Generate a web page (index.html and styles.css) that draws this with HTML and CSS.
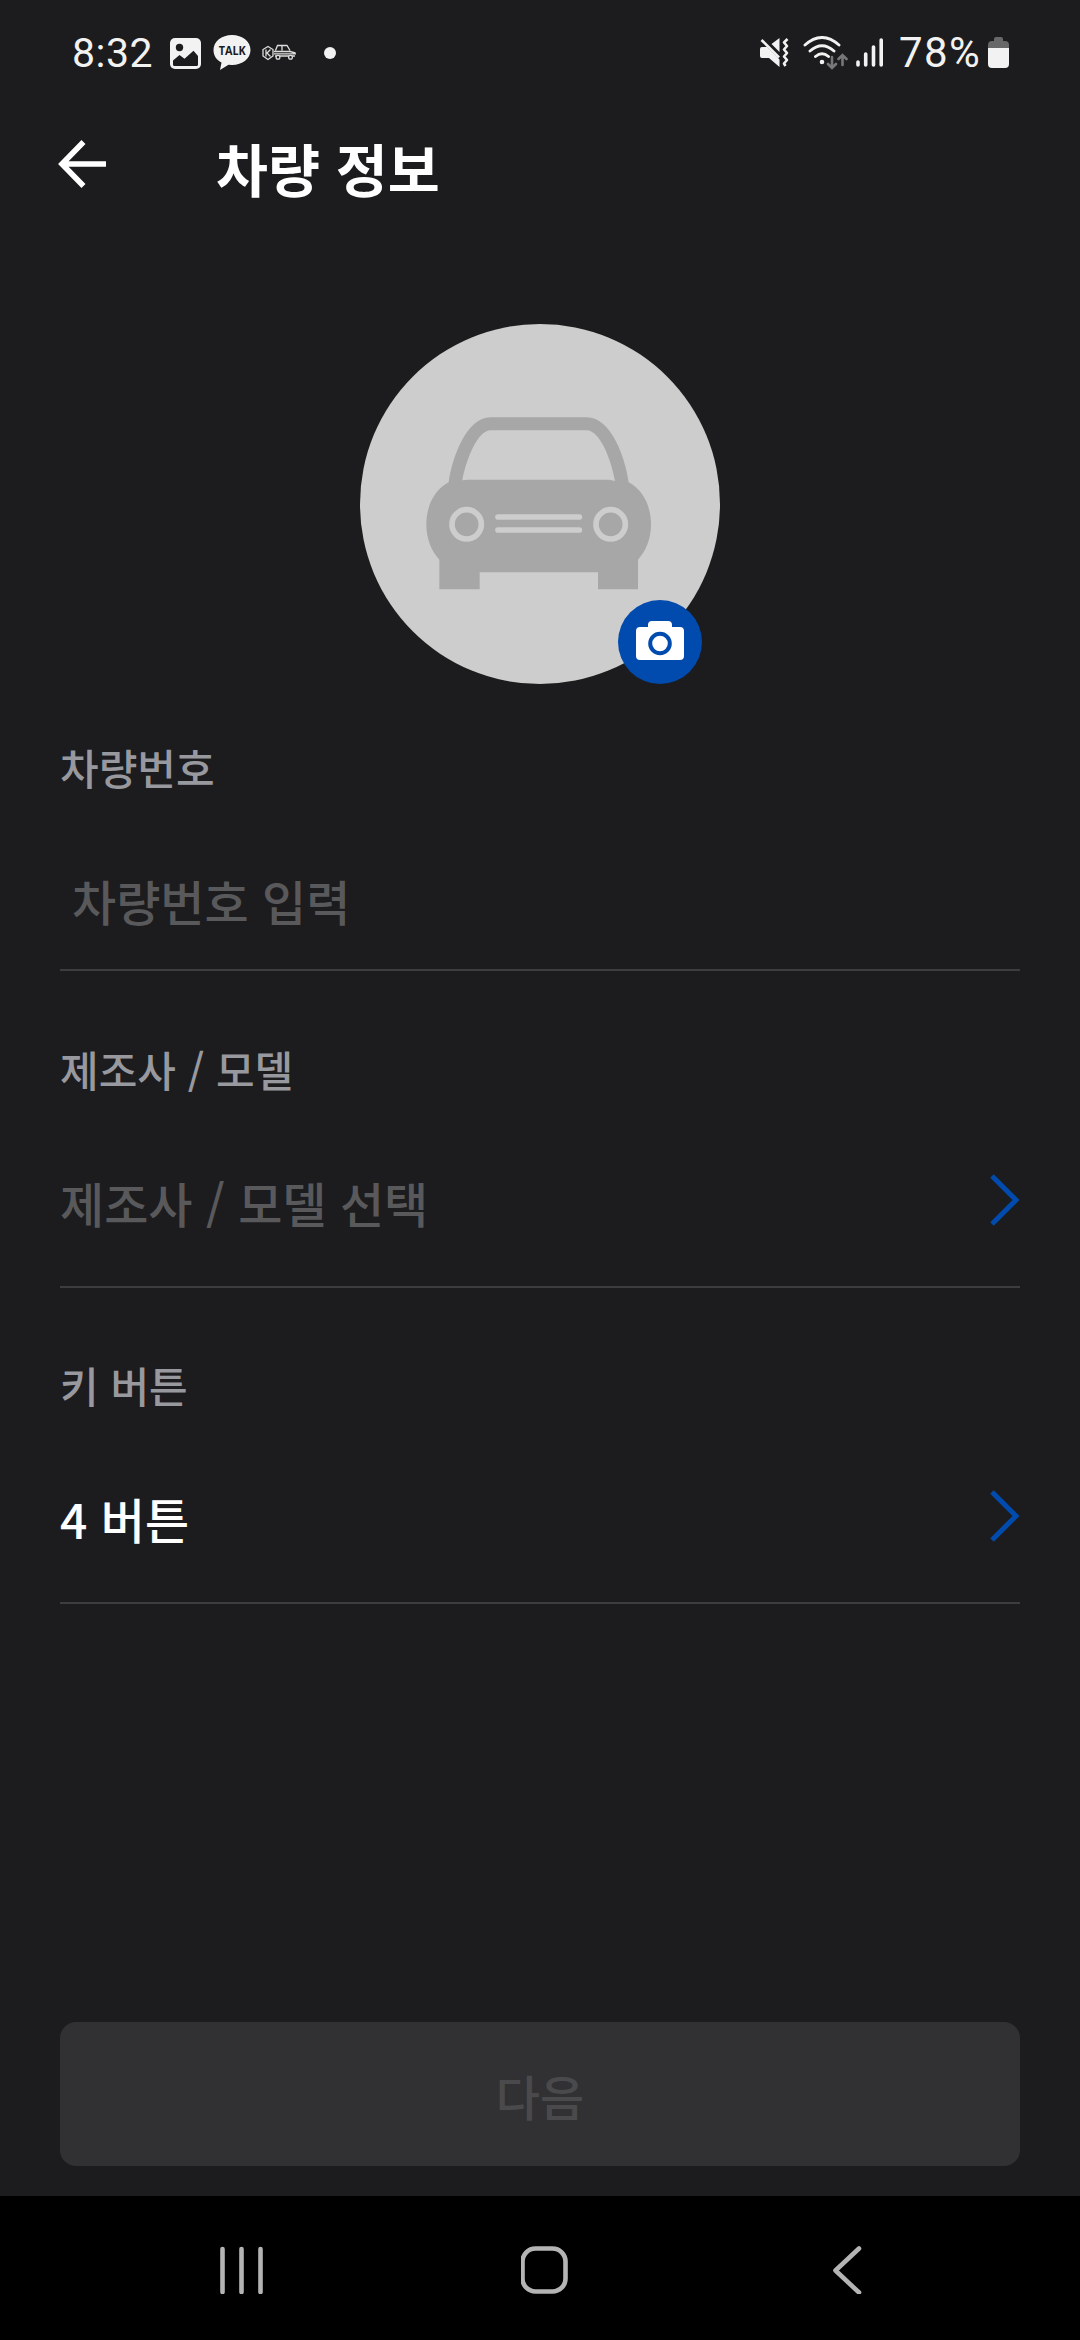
FILE: index.html
```html
<!DOCTYPE html>
<html lang="ko">
<head>
<meta charset="utf-8">
<title>차량 정보</title>
<link rel="stylesheet" href="styles.css">
</head>
<body>
<div class="status">
  <div class="status-left">
    <span class="clock">8:32</span>
    <svg class="ic-photo" viewBox="0 0 31 31"><rect width="31" height="31" rx="5" fill="#f2f2f2"/><circle cx="9.5" cy="9.5" r="3.7" fill="#1c1c1e"/><path d="M3 22.5 9.500 17l5 3.800 9-8L28 18v8.500q0 1.500-1.500 1.500H4.500Q3 28 3 26.500z" fill="#1c1c1e"/></svg>
    <svg class="ic-talk" viewBox="0 0 38 36"><path d="M19 0C8.500 0 .5 6.500.5 15c0 5.500 3 10 8 12.500L7 35l8.500-5.300 3.500.3c10.500 0 18.500-6.500 18.500-15S29.500 0 19 0z" fill="#f2f2f2"/><text x="19.300" y="20" text-anchor="middle" textLength="27" lengthAdjust="spacingAndGlyphs" class="talk-text">TALK</text></svg>
    <svg class="ic-car" viewBox="0 0 36 18" fill="none" stroke="#ddd" stroke-width="1.300"><path d="M7 2.500 12 5.500v6.500l-5 3.500-5-3.500V5.500z"/><path d="M5 5.500v7M9.500 5.500 6 9l3.500 3.500"/><path d="M14.500 6.500 16.500 1.500h9.500l3 5M21 1.500v5M13 7.500h16l5.500 1.500M13 9.800h22M14 12h20"/><circle cx="17" cy="13.200" r="1.900" fill="#1c1c1e"/><circle cx="29.500" cy="13.200" r="1.900" fill="#1c1c1e"/></svg>
    <span class="dot"></span>
  </div>
  <div class="status-right">
    <svg class="ic-mute" viewBox="0 0 31 30"><path d="M1 11q0-2 2-2h5l12.500 12.500V29L10 20H3q-2 0-2-2zM12.500 6 20.500 0v14z" fill="#f2f2f2"/><path d="M2.500 2 20 19.500" stroke="#f2f2f2" stroke-width="2.600"/><path d="M28.500 1l-3.500 3.500 3 3.500-3 3.500 3 3.500-3 3.500 3 3.500-3 3.500 1.500 2.500" stroke="#f2f2f2" stroke-width="2.600" stroke-linejoin="round" fill="none"/></svg>
    <svg class="ic-wifi" viewBox="0 0 45 34" fill="none" stroke="#f2f2f2" stroke-width="2.900" stroke-linecap="round"><path d="M2 9Q19 -6 36 9M7 15q12-10.500 24 0M12.500 20.500q6.500-5.500 13 0"/><circle cx="19" cy="26" r="2.300" fill="#f2f2f2" stroke="none"/><path d="M29 21v10M25 28l4 4 4-4M39.500 29V19M35.500 23l4-4 4 4" stroke="#777" stroke-width="2.600"/></svg>
    <svg class="ic-signal" viewBox="0 0 28 30" stroke="#f2f2f2" stroke-width="3.600" stroke-linecap="round"><path d="M2 24v3M9.700 16v11M17.500 9v18M25.200 2v25"/></svg>
    <span class="percent">78%</span>
    <svg class="ic-battery" viewBox="0 0 21 32"><path d="M6 2q0-2 2-2h5q2 0 2 2v2h2q4 0 4 4v3H0V8q0-4 4-4h2z" fill="#686868"/><path d="M0 11h21v16q0 4-4 4H4q-4 0-4-4z" fill="#f2f2f2"/></svg>
  </div>
</div>

<header class="header">
  <svg class="back" viewBox="0 0 48 48" fill="none" stroke="#fff" stroke-width="5.600"><path d="M25.500 2 4 24 25.500 46M4 24h44"/></svg>
  <h1 class="title">차량 정보</h1>
</header>

<main class="content">
  <div class="avatar">
    <svg class="car" viewBox="30 42 1080 1080">
      <path fill="#a7a7a7" fill-rule="evenodd" d="M296 517C306 445 348 322 422 322H710C784 322 826 445 836 517C880 540 903 590 903 643C903 685 889 722 864 749V838H744V787H389V838H268V749C243 722 229 685 229 643C229 590 252 540 296 517ZM337 511L355 509H777L795 513C785 455 751 361 710 361H422C381 361 347 455 337 511Z"/>
      <g fill="none" stroke="#cdcdcd" stroke-width="17"><circle cx="350" cy="643" r="44"/><circle cx="782" cy="643" r="44"/><path stroke-linecap="round" d="M444 621H688M444 660H688"/></g>
    </svg>
    <div class="badge">
      <svg class="camera" viewBox="0 0 48 39"><path fill="#fff" d="M4 6h8V4q0-4 4-4h16q4 0 4 4v2h8q4 0 4 4v25q0 4-4 4H4q-4 0-4-4V10q0-4 4-4z"/><circle cx="24" cy="22.500" r="9.800" fill="none" stroke="#004bad" stroke-width="4"/></svg>
    </div>
  </div>

  <section class="field field-input">
    <div class="label">차량번호</div>
    <div class="value placeholder">차량번호 입력</div>
  </section>
  <section class="field">
    <div class="label">제조사 / 모델</div>
    <div class="value placeholder"><span>제조사 / 모델 선택</span><svg class="chevron" viewBox="0 0 30 52"><path d="M2 2 26 26 2 50"/></svg></div>
  </section>
  <section class="field">
    <div class="label">키 버튼</div>
    <div class="value"><span>4 버튼</span><svg class="chevron" viewBox="0 0 30 52"><path d="M2 2 26 26 2 50"/></svg></div>
  </section>

  <div class="next">다음</div>
</main>

<nav class="navbar">
  <svg class="nav-icon" viewBox="0 0 48 48"><path d="M4.500 3v43M23.500 3v43M42.500 3v43"/></svg>
  <svg class="nav-icon" viewBox="0 0 48 48"><rect x="1.500" y="2.500" width="43" height="43" rx="13"/></svg>
  <svg class="nav-icon" viewBox="0 0 48 48"><path d="M35 2.500 11.500 24.500 35 46.500"/></svg>
</nav>
</body>
</html>
```
FILE: styles.css
```css
* { box-sizing: border-box; }
body {
  margin: 0;
  width: 1080px;
  height: 2340px;
  display: flex;
  flex-direction: column;
  background: #1c1c1e;
  color: #fff;
  font-family: "Noto Sans CJK KR", sans-serif;
  font-weight: 500;
  overflow: hidden;
}
svg { display: block; flex: none; }

.status {
  height: 106px;
  padding: 0 71px 0 72px;
  display: flex;
  justify-content: space-between;
  color: #f2f2f2;
  font: 400 41px/106px Roboto, sans-serif;
}
.status-left, .status-right { display: flex; align-items: center; }
.clock { width: 98px; letter-spacing: 0.5px; }
.ic-photo { width: 31px; height: 31px; }
.ic-talk { width: 38px; height: 36px; margin-left: 12px; }
.talk-text { font: 700 12.5px "Open Sans", sans-serif; fill: #1c1c1e; }
.ic-car { width: 36px; height: 18px; margin-left: 10px; }
.dot { width: 12px; height: 12px; margin-left: 27px; border-radius: 50%; background: #f2f2f2; }
.ic-mute { width: 31px; height: 30px; }
.ic-wifi { width: 45px; height: 34px; margin-left: 13px; }
.ic-signal { width: 28px; height: 30px; margin-left: 8px; }
.percent { margin-left: 15px; width: 84px; font-size: 42px; letter-spacing: 1.4px; }
.ic-battery { width: 21px; height: 32px; margin-left: 5px; }

.header {
  height: 116px;
  padding-left: 58px;
  display: flex;
  align-items: center;
}
.back { width: 48px; height: 48px; }
.title { margin: 6px 0 0 110px; font-size: 56.5px; line-height: 80px; font-weight: 700; }

.content {
  flex: 1;
  padding: 102px 60px 30px;
  display: flex;
  flex-direction: column;
}
.avatar {
  position: relative;
  align-self: center;
  width: 360px;
  height: 360px;
  border-radius: 50%;
  background: #cdcdcd;
}
.car { width: 360px; height: 360px; }
.badge {
  position: absolute;
  right: 18px;
  bottom: 0;
  width: 84px;
  height: 84px;
  border-radius: 50%;
  background: #004bad;
  display: flex;
  align-items: center;
  justify-content: center;
}
.camera { width: 48px; height: 39px; margin-top: -3px; }

.field {
  margin-top: 72px;
  padding-bottom: 54px;
  border-bottom: 2px solid #3d3d40;
}
.field-input { margin-top: 58px; margin-bottom: 1px; padding-bottom: 39px; }
.label { font-size: 42px; line-height: 50px; color: #98989f; }
.value {
  margin-top: 78px;
  display: flex;
  justify-content: space-between;
  align-items: center;
  font-size: 48px;
  line-height: 60px;
}
.field-input .value { padding-left: 12px; }
.placeholder { color: #59595c; font-weight: 500; }
.chevron { width: 30px; height: 52px; margin-top: -4px; fill: none; stroke: #004bad; stroke-width: 5; }

.next {
  margin-top: auto;
  height: 144px;
  border-radius: 16px;
  background: #313133;
  color: #4a4a4c;
  font-size: 48px;
  line-height: 146px;
  text-align: center;
}

.navbar {
  height: 144px;
  padding: 4px 208px 0 218px;
  display: flex;
  align-items: center;
  justify-content: space-between;
  background: #000;
}
.nav-icon { width: 48px; height: 48px; fill: none; stroke: #b4b4b4; stroke-width: 4.6; stroke-linecap: round; stroke-linejoin: round; }
```
